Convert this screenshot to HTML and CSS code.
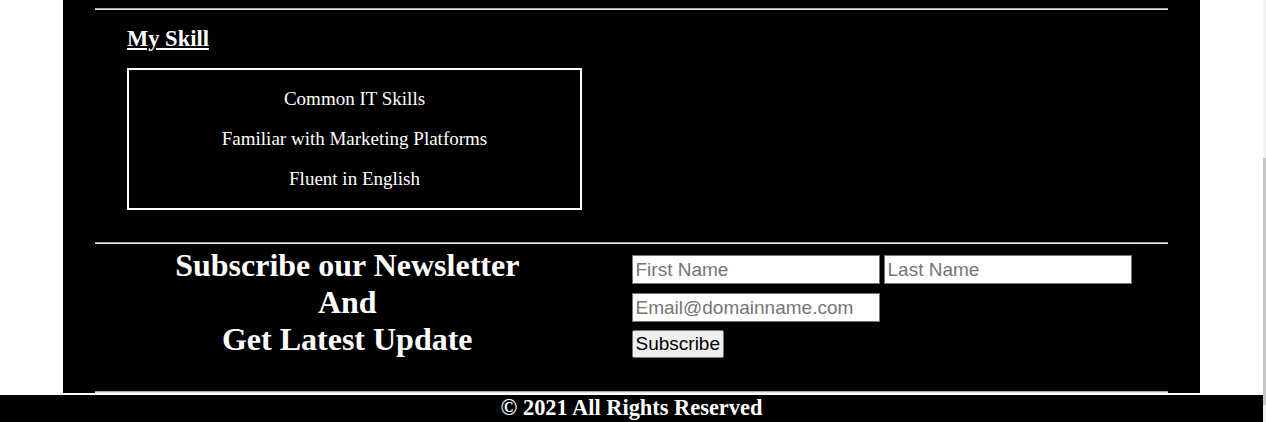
FILE: index.html
```html
<!DOCTYPE html>
<html lang="en">
<head>
<meta charset="utf-8">
<title>My Skill</title>
<link rel="stylesheet" href="styles.css">
</head>
<body>
<div class="page">
  <main class="container">
    <hr class="rule">
    <section class="skills">
      <h3 class="skills-title">My Skill</h3>
      <div class="skills-box">
        <p class="skill">Common IT Skills</p>
        <p class="skill">Familiar with Marketing Platforms</p>
        <p class="skill">Fluent in English</p>
      </div>
    </section>
    <hr class="rule">
    <section class="newsletter">
      <h1 class="newsletter-title">Subscribe our Newsletter<br>And<br>Get Latest Update</h1>
      <form class="newsletter-form">
        <div class="form-row row-names">
          <input class="field" type="text" placeholder="First Name">
          <input class="field" type="text" placeholder="Last Name">
        </div>
        <div class="form-row row-email">
          <input class="field" type="email" placeholder="Email@domainname.com">
        </div>
        <div class="form-row row-button">
          <button class="subscribe" type="button">Subscribe</button>
        </div>
      </form>
    </section>
    <hr class="rule">
  </main>
  <footer class="footer">© 2021 All Rights Reserved</footer>
</div>
<div class="scrollbar"></div>
</body>
</html>
```

FILE: styles.css
```css
html, body {
  margin: 0;
  padding: 0;
}

body {
  display: flex;
  height: 422px;
  overflow: hidden;
  background: #ffffff;
  font-family: "Liberation Serif", "Times New Roman", serif;
  color: #ffffff;
}

.page {
  width: 1263px;
  flex: none;
}

.scrollbar {
  width: 3px;
  flex: none;
  height: 422px;
  background: linear-gradient(to bottom, #f1f1f1 0, #f1f1f1 158px, #c8c8c8 158px, #c8c8c8 405px, #f1f1f1 405px);
}

.container {
  display: block;
  margin: 0 63px;
  padding-top: 8px;
  background: #000000;
}

.rule {
  margin: 0 32px;
  height: 0;
  border: none;
  border-top: 1px solid #a6a6a6;
  border-bottom: 1px solid #e6e6e6;
}

.skills {
  padding: 16px 0 32px 64px;
}

.skills-title {
  margin: 0 0 16px 0;
  font-size: 22.5px;
  line-height: 26px;
  font-weight: bold;
  text-decoration: underline;
  text-underline-offset: 2px;
}

.skills-box {
  box-sizing: border-box;
  width: 455px;
  height: 142px;
  border: 2px solid #ffffff;
  padding: 18px 0 19px;
  display: flex;
  flex-direction: column;
  gap: 19px;
  text-align: center;
}

.skill {
  margin: 0;
  font-size: 19px;
  line-height: 21px;
}

.newsletter {
  display: grid;
  grid-template-columns: 1fr 1fr;
  padding-bottom: 33px;
}

.newsletter-title {
  margin: 3px 0 0 0;
  font-size: 32px;
  line-height: 37px;
  font-weight: bold;
  text-align: center;
}

.newsletter-form {
  display: flex;
  flex-direction: column;
  padding-top: 11px;
}

.form-row {
  display: flex;
  gap: 4px;
}

.row-email {
  margin-top: 9px;
}

.row-button {
  margin-top: 8px;
}

.field {
  box-sizing: border-box;
  width: 248px;
  height: 29px;
  margin: 0;
  padding: 0 3px;
  border: 1px solid #767676;
  background: #ffffff;
  font-family: "Liberation Sans", Arial, sans-serif;
  font-size: 19px;
  color: #000000;
}

.field::placeholder {
  color: #757575;
}

.subscribe {
  box-sizing: border-box;
  height: 28px;
  margin: 0;
  padding: 0 3px;
  border: 1px solid #767676;
  border-radius: 2px;
  background: #efefef;
  font-family: "Liberation Sans", Arial, sans-serif;
  font-size: 19px;
  color: #000000;
}

.footer {
  margin-top: 2px;
  height: 40px;
  background: #000000;
  font-size: 22.4px;
  line-height: 26px;
  font-weight: bold;
  text-align: center;
}
```
